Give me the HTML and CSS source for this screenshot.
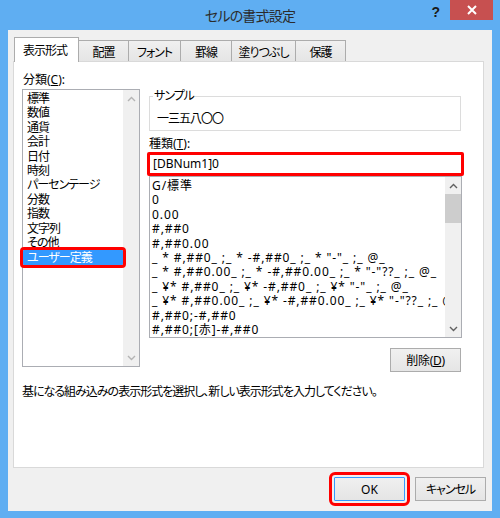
FILE: index.html
```html
<!DOCTYPE html>
<html lang="ja">
<head>
<meta charset="utf-8">
<title>セルの書式設定</title>
<link rel="stylesheet" href="styles.css">
</head>
<body>
<div class="window">
  <div class="titlebar">
    <div class="tb-side"></div>
    <div class="title">セルの書式設定</div>
    <div class="tb-side tb-right">
      <span class="help">?</span>
      <span class="close"><svg width="10" height="10" viewBox="0 0 10 10"><path d="M1 1 L9 9 M9 1 L1 9" stroke="#fff" stroke-width="2" fill="none"/></svg></span>
    </div>
  </div>
  <div class="client">
    <div class="tabs">
      <div class="tab sel t1">表示形式</div>
      <div class="tab t2">配置</div>
      <div class="tab t3">フォント</div>
      <div class="tab t4">罫線</div>
      <div class="tab t5">塗りつぶし</div>
      <div class="tab t6">保護</div>
    </div>
    <div class="panel">
      <div class="cols">
        <div class="left">
          <div class="label lbl-cat">分類(<u>C</u>):</div>
          <div class="listbox cat">
            <ul class="items">
              <li>標準</li>
              <li>数値</li>
              <li>通貨</li>
              <li>会計</li>
              <li>日付</li>
              <li>時刻</li>
              <li>パーセンテージ</li>
              <li>分数</li>
              <li>指数</li>
              <li>文字列</li>
              <li>その他</li>
              <li class="selected">ユーザー定義</li>
            </ul>
            <div class="vscroll disabled">
              <svg class="arr" width="9" height="6" viewBox="0 0 9 6"><path d="M1 5 L4.5 1.5 L8 5" stroke="#b4b4b4" stroke-width="1.4" fill="none"/></svg>
              <div class="track"></div>
              <svg class="arr" width="9" height="6" viewBox="0 0 9 6"><path d="M1 1 L4.5 4.5 L8 1" stroke="#b4b4b4" stroke-width="1.4" fill="none"/></svg>
            </div>
          </div>
        </div>
        <div class="right">
          <fieldset class="sample">
            <legend>サンプル</legend>
            <div class="sample-val">一三五八〇〇</div>
          </fieldset>
          <div class="label lbl-type">種類(<u>T</u>):</div>
          <div class="input">[DBNum1]0</div>
          <div class="listbox fmt">
            <ul class="items">
              <li>G/標準</li>
              <li>0</li>
              <li>0.00</li>
              <li>#,##0</li>
              <li>#,##0.00</li>
              <li>_ * #,##0_ ;_ * -#,##0_ ;_ * "-"_ ;_ @_</li>
              <li>_ * #,##0.00_ ;_ * -#,##0.00_ ;_ * "-"??_ ;_ @_</li>
              <li>_ ¥* #,##0_ ;_ ¥* -#,##0_ ;_ ¥* "-"_ ;_ @_</li>
              <li>_ ¥* #,##0.00_ ;_ ¥* -#,##0.00_ ;_ ¥* "-"??_ ;_ @_</li>
              <li>#,##0;-#,##0</li>
              <li>#,##0;[赤]-#,##0</li>
            </ul>
            <div class="vscroll">
              <svg class="arr" width="9" height="6" viewBox="0 0 9 6"><path d="M1 5 L4.5 1.5 L8 5" stroke="#606060" stroke-width="1.4" fill="none"/></svg>
              <div class="track"><div class="thumb"></div></div>
              <svg class="arr" width="9" height="6" viewBox="0 0 9 6"><path d="M1 1 L4.5 4.5 L8 1" stroke="#606060" stroke-width="1.4" fill="none"/></svg>
            </div>
          </div>
          <div class="del-row"><button class="btn del">削除(<u>D</u>)</button></div>
        </div>
      </div>
      <p class="desc">基になる組み込みの表示形式を選択し、新しい表示形式を入力してください。</p>
    </div>
    <div class="buttons">
      <button class="btn default">OK</button>
      <button class="btn">キャンセル</button>
    </div>
  </div>
</div>
</body>
</html>
```
FILE: styles.css
```css
* { box-sizing: border-box; }
html, body { margin: 0; padding: 0; }
body {
  width: 500px;
  height: 518px;
  font-family: "Noto Sans", "Noto Sans CJK JP", sans-serif;
  font-size: 12px;
  font-feature-settings: "palt";
  letter-spacing: -1px;
  color: #000;
  background: #5faef2;
}
.window {
  width: 500px;
  height: 518px;
  background: #5faef2;
  display: flex;
  flex-direction: column;
}
.titlebar {
  height: 30px;
  display: grid;
  grid-template-columns: 1fr auto 1fr;
  align-items: start;
}
.title {
  font-size: 14px;
  letter-spacing: -0.8px;
  line-height: 30px;
  color: #2b2b2b;
  padding-top: 1px;
}
.tb-right {
  display: flex;
  justify-content: flex-end;
  align-items: flex-start;
  padding-right: 7px;
}
.help {
  font-family: "Liberation Sans", sans-serif;
  font-weight: bold;
  font-size: 14px;
  line-height: 14px;
  letter-spacing: 0;
  color: #1a1a1a;
  margin-top: 5px;
  margin-right: 10px;
}
.close {
  width: 43px;
  height: 20px;
  background: #c75050;
  display: flex;
  align-items: center;
  justify-content: center;
}
.client {
  margin: 0 8px;
  height: 481px;
  background: #f0f0f0;
  padding: 7px 0 0 5px;
}
.tabs {
  display: flex;
  align-items: flex-end;
  height: 24px;
  margin-left: 1px;
  position: relative;
  z-index: 1;
}
.tab {
  height: 21px;
  border: 1px solid #acacac;
  border-bottom: none;
  background: linear-gradient(#f0f0f0, #e5e5e5);
  display: flex;
  align-items: center;
  justify-content: center;
  margin-left: -1px;
  padding-top: 1px;
}
.tab.sel {
  height: 25px;
  margin-bottom: -1px;
  background: #fff;
  margin-left: 0;
  justify-content: flex-start;
  padding-left: 8px;
  padding-top: 0;
}
.t1 { width: 65px; }
.t2 { width: 51px; }
.t3 { width: 53px; }
.t4 { width: 52px; }
.t5 { width: 65px; }
.t6 { width: 51px; }
.panel {
  width: 471px;
  height: 407px;
  background: #fff;
  border: 1px solid #d9d9d9;
}
.cols {
  display: flex;
  padding-left: 8px;
}
.left { width: 118px; }
.label { line-height: 15px; letter-spacing: 0; }
.lbl-cat { height: 27px; padding-top: 10px; padding-left: 1px; }
.listbox {
  border: 1px solid #abadb3;
  background: #fff;
  display: flex;
}
.listbox .items {
  list-style: none;
  margin: 0;
  padding: 2px 0 0 0;
  flex: 1;
  min-width: 0;
}
.fmt .items { overflow: hidden; }
.listbox li {
  line-height: 14.4px;
  height: 14.4px;
  white-space: pre;
}
.cat { height: 278px; }
.cat li { padding-left: 4px; }
.cat li.selected {
  background: #3399ff;
  color: #fff;
  height: 15px;
  line-height: 15px;
  outline: 3px solid #ff0000;
  border-radius: 1px;
  position: relative;
  z-index: 1;
}
.vscroll {
  width: 16px;
  background: #f0f0f0;
  display: flex;
  flex-direction: column;
  align-items: center;
}
.vscroll .arr {
  margin: 6px 0 5px;
  flex: none;
}
.vscroll .track { flex: 1; width: 100%; }
.thumb {
  width: 100%;
  height: 29px;
  background: #cdcdcd;
}
.right {
  margin-left: 9px;
  width: 313px;
}
.sample {
  margin: 27px 1px 0 0;
  padding: 0 0 4px 3px;
  border: 1px solid #dcdcdc;
  min-width: 0;
}
.sample legend {
  padding: 0 1px;
  line-height: 14px;
}
.sample-val {
  line-height: 15px;
  padding: 8px 0 0 4px;
}
.lbl-type { margin-top: 5px; }
.input {
  margin: 1px -2px 0;
  height: 24px;
  border: 3px solid #ff0000;
  border-radius: 2px;
  line-height: 18px;
  padding-left: 3px;
  letter-spacing: 0;
}
.fmt { height: 162px; }
.fmt li { padding-left: 2px; letter-spacing: 0.9px; }
.del-row {
  display: flex;
  justify-content: flex-end;
  margin-top: 10px;
  padding-right: 1px;
}
.btn {
  font: inherit;
  letter-spacing: -1px;
  width: 71px;
  height: 24px;
  border: 1px solid #acacac;
  background: linear-gradient(#f0f0f0, #e5e5e5);
  color: #000;
  padding: 0;
  border-radius: 0;
}
.btn.del { letter-spacing: -0.3px; }
.desc {
  margin: 12px 0 0 8px;
  line-height: 15px;
  letter-spacing: -1px;
}
.buttons {
  display: flex;
  justify-content: flex-end;
  gap: 10px;
  margin-top: 9px;
  padding-right: 6px;
}
.btn.default {
  border-color: #3399ff;
  outline: 3px solid #ff0000;
  outline-offset: 2px;
  border-radius: 1px;
  letter-spacing: 0;
}
```
